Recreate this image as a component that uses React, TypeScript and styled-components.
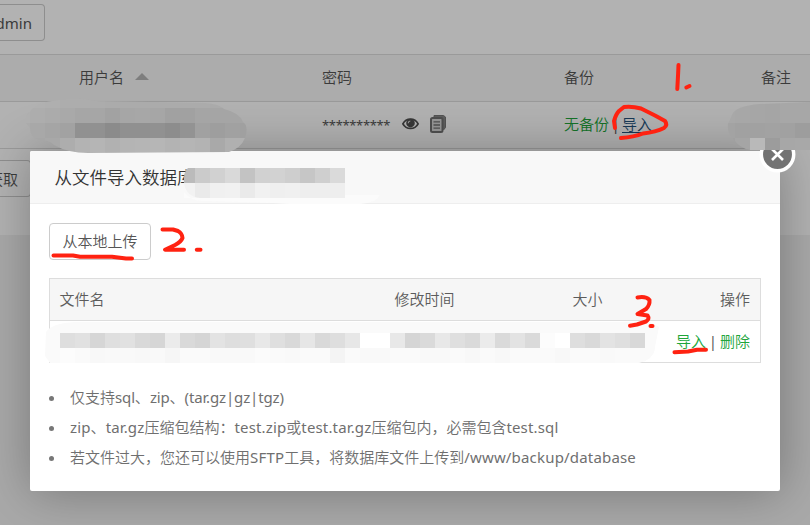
import React from 'react';
import styled, { createGlobalStyle } from 'styled-components';

const Global = createGlobalStyle`
  * { box-sizing: border-box; }
  body {
    margin: 0;
    background: #f2f2f2;
    font: 350 15px/22px "Noto Sans", "Noto Sans CJK SC", sans-serif;
    color: #5c5c5c;
    overflow: hidden;
  }
`;

const Screen = styled.div`
  position: relative;
  width: 810px;
  height: 525px;
  overflow: hidden;
`;

const Panel = styled.main`
  height: 235px;
  background: #fff;
`;

const Toolbar = styled.div`
  display: flex;
  align-items: flex-start;
  height: 54px;
  padding-top: 4px;
`;

const EdgeButton = styled.button<{ $width: number }>`
  width: ${p => p.$width}px;
  height: 37px;
  padding: 0 12px 0 0;
  display: flex;
  align-items: center;
  justify-content: flex-end;
  border: 1px solid #ccc;
  border-left: 0;
  border-radius: 0 4px 4px 0;
  background: transparent;
  font: inherit;
  color: #555;
  white-space: nowrap;
`;

const DbRow = styled.div<{ $head?: boolean }>`
  display: grid;
  grid-template-columns: 243px 242px 197px 1fr;
  align-items: center;
  height: 47px;
  padding: 0 0 2px 79px;
  border-top: 1px solid #ddd;
  background: ${p => (p.$head ? '#f6f6f6' : '#fff')};
  color: #555;
`;

const Cell = styled.div`
  display: flex;
  align-items: center;
  white-space: pre;
`;

const SortArrow = styled.i`
  margin: -1px 0 0 11px;
  border: 7px solid transparent;
  border-top: 0;
  border-bottom-color: #b5b5b5;
`;

const Stars = styled.span`
  width: 80px;
  padding-top: 1px;
  font-size: 13px;
  font-weight: 400;
  letter-spacing: -0.35px;
`;

const IconGap = styled.span`
  display: flex;
  align-items: center;
  gap: 11px;
`;

const Link = styled.a<{ $active?: boolean }>`
  color: ${p => (p.$active ? '#23527c' : '#20a53a')};
  text-decoration: ${p => (p.$active ? 'underline' : 'none')};
  text-underline-offset: 2px;
`;

const Bar = styled.span<{ $width: number }>`
  display: inline-block;
  width: ${p => p.$width}px;
  text-align: center;
  font-weight: 400;
`;

const Pager = styled.div`
  border-top: 1px solid #ddd;
  padding-top: 11px;
`;

const Shade = styled.div`
  position: absolute;
  inset: 0;
  display: flex;
  justify-content: center;
  align-items: flex-start;
  padding-top: 151px;
  background: rgba(0, 0, 0, 0.3);
`;

const Dialog = styled.section`
  position: relative;
  width: 750px;
  height: 340px;
  background: #fff;
  border-radius: 2px;
  box-shadow: 1px 1px 50px rgba(0, 0, 0, 0.3);
`;

const DialogTitle = styled.h2`
  margin: 0;
  height: 53px;
  padding: 0 24.5px;
  border-bottom: 1px solid #eee;
  border-radius: 2px 2px 0 0;
  background: #f8f8f8;
  color: #333;
  font-size: 17.5px;
  font-weight: 350;
  line-height: 53px;
`;

const CloseButton = styled.button`
  position: absolute;
  top: -15px;
  right: -16px;
  width: 37px;
  height: 37px;
  padding: 0;
  border: 0;
  background: none;
  svg { display: block; }
`;

const DialogBody = styled.div`
  padding: 19px 19px 0;
`;

const UploadButton = styled.button`
  display: block;
  width: 102px;
  height: 37px;
  padding: 0 0 2px;
  border: 1px solid #ccc;
  border-radius: 4px;
  background: #fff;
  color: #555;
  font: inherit;
`;

const FileTable = styled.div`
  margin-top: 18px;
  width: 712px;
  border: 1px solid #ddd;
`;

const FileRow = styled.div<{ $head?: boolean }>`
  display: grid;
  grid-template-columns: 335px 178px 1fr auto;
  align-items: center;
  height: ${p => (p.$head ? 42 : 41)}px;
  padding: 0 10px 2px 9.5px;
  border-bottom: ${p => (p.$head ? '1px solid #ddd' : '0')};
  background: ${p => (p.$head ? '#f6f6f6' : '#fff')};
`;

const Actions = styled.div`
  grid-column: 4;
  white-space: pre;
`;

const Notes = styled.ul`
  list-style: none;
  margin: 20px 0 0;
  padding: 0;
  color: #6f6f6f;
`;

const Note = styled.li`
  display: flex;
  align-items: center;
  gap: 16px;
  height: 30px;
  padding-bottom: 2px;
  white-space: nowrap;
  &::before {
    content: '';
    width: 5px;
    height: 5px;
    margin-top: 2px;
    border-radius: 50%;
    background: #777;
  }
`;

const Latin = styled.span<{ $tracking?: number }>`
  font-weight: 400;
  letter-spacing: ${p => p.$tracking ?? 0}px;
`;

/* Latin runs are set a step heavier than the Chinese text around them. */
const Mixed = ({ text, tracking }: { text: string; tracking?: number }) => (
  <span>
    {text.split(/([\x21-\x7e]+)/).map((run, i) => (i % 2 ? <Latin key={i} $tracking={tracking}>{run}</Latin> : run))}
  </span>
);

const Ink = styled.svg`
  position: absolute;
  inset: 0;
  pointer-events: none;
`;

const EyeIcon = () => (
  <svg width="17" height="14" viewBox="0 0 17 14">
    <path d="M.9 6.8C4.2.6 12.8.6 16.1 6.800 12.8 13 4.200 13 .9 6.800Z" fill="none" stroke="#505050" strokeWidth="1.8" />
    <circle cx="8.5" cy="6" r="4.3" fill="#505050" />
    <path d="M6.2 6.2A2.3 2.3 0 0 1 8.3 4" fill="none" stroke="#ddd" strokeWidth="1.1" />
  </svg>
);

const CopyIcon = () => (
  <svg width="16" height="18" viewBox="0 0 16 18">
    <path d="M4 2.5V.5h9.5L15.5 2v10.5l-2 2.5" fill="#888" stroke="#777" />
    <rect x="1" y="3" width="11.5" height="14" rx="1.5" fill="#d8d8d8" stroke="#727272" strokeWidth="2" />
    <path d="M3.5 6.8h6.5M3.5 10h6.5M3.5 13.2h6.5" stroke="#727272" strokeWidth="1.3" />
  </svg>
);

const tiles = (x: number, y: number, height: number, colors: string) =>
  colors.split(' ').map((c, i) => (
    <rect key={`${y}-${i}`} x={x + i * 15} y={y} width="15" height={height} fill={`#${c}`} />
  ));

const Redactions = () => (
  <Ink width="810" height="525" viewBox="0 0 810 525">
    <defs>
      <clipPath id="user"><path d="M30 112Q34 104 52 101Q75 96 95 101L205 103Q219 104 224 109Q240 113 243 122Q249 126 245 138Q241 148 229 152L88 153Q68 153 54 145Q50 140 38 140Q30 137 30 128L26 123V115Z" /></clipPath>
      <clipPath id="remark"><path d="M732 115Q735 106 760 104L810 102V150H750Q739 148 733 138Q727 134 728 124Z" /></clipPath>
      <clipPath id="name"><path d="M188 168H345V198H200Q187 197 184 184Q183 172 188 168Z" /></clipPath>
      <clipPath id="file"><path d="M46 332Q52 323 75 322H650L659 327L655 347Q654 360 638 363H50L45 356Z" /></clipPath>
    </defs>
    <g clipPath="url(#user)">
      {tiles(15, 93, 15, 'b0b0b0 b0b0b0 afafaf adadad adadad acacac ababab ababab ababab ababab ababab ababab ababab aaaaaa a9a9a9 a8a8a8')}
      {tiles(15, 108, 15, 'afafaf adadad ababab a9a9a9 a6a6a6 a6a6a6 a2a2a2 a6a6a6 a7a7a7 a6a6a6 a1a1a1 a1a1a1 a5a5a5 a5a5a5 a5a5a5 a5a5a5')}
      {tiles(15, 123, 15, 'ababab a8a8a8 a5a5a5 a2a2a2 919191 919191 8b8b8b 909090 909090 919191 8d8d8d 939393 a1a1a1 9e9e9e a1a1a1 a0a0a0')}
      {tiles(15, 138, 15, 'a8a8a8 a6a6a6 a8a8a8 adadad b3b3b3 b5b5b5 b1b1b1 b4b4b4 b5b5b5 b6b6b6 b3b3b3 b5b5b5 b3b3b3 a9a9a9 b0b0b0 b0b0b0')}
    </g>
    <g clipPath="url(#remark)">
      {tiles(720, 93, 30, 'a8a8a8 a7a7a7 a6a6a6 a5a5a5 a7a7a7 a7a7a7')}
      {tiles(720, 123, 15, 'a3a3a3 a1a1a1 a1a1a1 a2a2a2 a1a1a1 9d9d9d')}
      {tiles(720, 138, 12, 'a0a0a0 a5a5a5 b9b9b9 9c9c9c a7a7a7 a8a8a8')}
    </g>
    <path d="M184 198H345V195H380Q376 203 360 204H290Q255 202 205 201Q192 202 184 192Z" fill="#fbfbfb" />
    <g clipPath="url(#name)">
      {tiles(180, 168, 15, 'bbbbbb cbcbcb d1d1d1 d9d9d9 c3c3c3 d1d1d1 d2d2d2 cecece c6c6c6 cfcfcf dadada')}
      {tiles(180, 183, 15, 'f2f2f2 eaeaea f0f0f0 f1f1f1 eaeaea f1f1f1 efefef f0f0f0 eeeeee eeeeee eeeeee')}
    </g>
    <g clipPath="url(#file)">
      <rect x="45" y="321" width="616" height="42" fill="#fafafa" />
      {tiles(60, 333, 15, 'dedede e1e1e1 d6d6d6 dfdfdf e1e1e1 d9d9d9 d6d6d6 ebebeb d9d9d9 d5d5d5 e3e3e3 dedede dfdfdf e8e8e8 dfdfdf d9d9d9 e6e6e6 d9d9d9 dedede e7e7e7 ffffff ffffff e8e8e8 d5d5d5 dadada e8e8e8 dfdfdf dadada ebebeb dadada e3e3e3 dadada fcfcfc ffffff dedede d9d9d9 e3e3e3 dfdfdf d8d8d8')}
      {tiles(60, 348, 15, 'fcfcfc fafafa f8f8f8 f9f9f9 f9f9f9 f8f8f8 f9f9f9 f6f6f6 fafafa fafafa f9f9f9 f9f9f9 f9f9f9 fbfbfb fafafa f9f9f9 fafafa fafafa f4f4f4 fafafa f9f9f9 f9f9f9 fafafa fafafa f9f9f9 f9f9f9 fafafa f8f8f8 fafafa f8f8f8 fafafa fafafa fafafa f8f8f8 fafafa fafafa f9f9f9 fafafa fafafa fafafa')}
    </g>
  </Ink>
);

const marks = [
  'M678.5 65L678 76L677.3 89',
  'M686.3 87.5L689.5 86',
  'M615 128L614 121Q616 114 619 111L624 107Q632 106 641 108.5L655 115.5L665 121Q668 125 664 128Q656 132 643 133.5Q634 137 621 138',
  'M162.5 229.5H173L178 231Q182 233 182.5 238Q181 242 175 245L165 249.7H184',
  'M196.8 249.7H200.5',
  'M53.5 255.5H73L80 256.7H112L126 258.5H132',
  'M637.5 297.5Q646 296 649.5 300Q650 305 646 309L637.5 314L647.5 315.5Q650 319 646 321.5L637 324.5L630 325.7',
  'M650.5 326H652.5',
  'M674.5 352.2L688 351.5L697 349.7H706',
];

export default function App() {
  return (
    <Screen>
      <Global />
      <Panel>
        <Toolbar><EdgeButton $width={45}><Latin>phpMyAdmin</Latin></EdgeButton></Toolbar>
        <DbRow $head>
          <Cell>用户名<SortArrow /></Cell>
          <Cell>密码</Cell>
          <Cell>备份</Cell>
          <Cell>备注</Cell>
        </DbRow>
        <DbRow>
          <Cell />
          <Cell>
            <Stars>**********</Stars>
            <IconGap><EyeIcon /><CopyIcon /></IconGap>
          </Cell>
          <Cell><Link>无备份</Link><Bar $width={13}>|</Bar><Link $active>导入</Link></Cell>
          <Cell />
        </DbRow>
        <Pager><EdgeButton $width={31}>获取</EdgeButton></Pager>
      </Panel>
      <Shade>
        <Dialog>
          <DialogTitle>从文件导入数据库</DialogTitle>
          <CloseButton aria-label="关闭">
            <svg width="37" height="37" viewBox="0 0 37 37">
              <circle cx="18.5" cy="18.5" r="16.2" fill="#737373" stroke="#fff" strokeWidth="3.5" />
              <path d="M13 13L24 24M24 13L13 24" stroke="#fff" strokeWidth="2.6" />
            </svg>
          </CloseButton>
          <DialogBody>
            <UploadButton>从本地上传</UploadButton>
            <FileTable>
              <FileRow $head>
                <span>文件名</span><span>修改时间</span><span>大小</span><span>操作</span>
              </FileRow>
              <FileRow>
                <Actions><Link>导入</Link><Bar $width={14}>|</Bar><Link>删除</Link></Actions>
              </FileRow>
            </FileTable>
            <Notes>
              <Note><Mixed text="仅支持sql、zip、(tar.gz|gz|tgz)" tracking={-0.15} /></Note>
              <Note><Mixed text="zip、tar.gz压缩包结构：test.zip或test.tar.gz压缩包内，必需包含test.sql" tracking={0.15} /></Note>
              <Note><Mixed text="若文件过大，您还可以使用SFTP工具，将数据库文件上传到/www/backup/database" tracking={0.18} /></Note>
            </Notes>
          </DialogBody>
        </Dialog>
      </Shade>
      <Redactions />
      <Ink width="810" height="525" viewBox="0 0 810 525">
        {marks.map(d => (
          <path key={d} d={d} fill="none" stroke="#ff2211" strokeWidth="4" strokeLinecap="round" strokeLinejoin="round" />
        ))}
      </Ink>
    </Screen>
  );
}
